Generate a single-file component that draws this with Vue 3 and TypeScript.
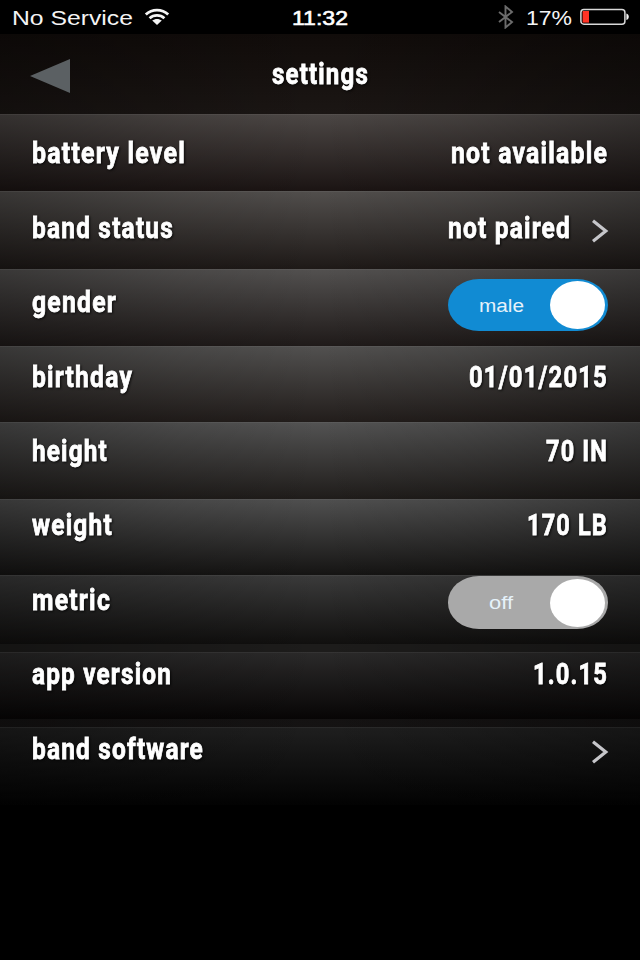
<script setup lang="ts">
import { h, ref, type FunctionalComponent } from 'vue'

interface FitProps {
  text: string
  width: number
}

// One line of text condensed or widened to an exact width; the baseline sits 24px below the top.
const FitText: FunctionalComponent<FitProps> = (props) =>
  h('svg', { width: props.width, height: 32, overflow: 'visible' }, [
    h('text', { x: 0, y: 24, textLength: props.width, lengthAdjust: 'spacingAndGlyphs' }, props.text),
  ])
FitText.props = ['text', 'width']

interface Row {
  label: string
  labelWidth: number
  value?: string
  valueWidth?: number
  toggle?: 'on' | 'off'
  link?: boolean
  height: number
  pad: number
  top: string
  bottom: string
  lip?: boolean
}

const rows = ref<Row[]>([
  { label: 'battery level', labelWidth: 154, value: 'not available', valueWidth: 157, height: 77, pad: 25, top: '#4c4745', bottom: '#1b1413' },
  { label: 'band status', labelWidth: 142, value: 'not paired', valueWidth: 123, link: true, height: 78, pad: 23, top: '#524f4d', bottom: '#1e1917' },
  { label: 'gender', labelWidth: 85, value: 'male', valueWidth: 45, toggle: 'on', height: 77, pad: 19, top: '#535150', bottom: '#1f1a19' },
  { label: 'birthday', labelWidth: 101, value: '01/01/2015', valueWidth: 139, height: 76, pad: 17, top: '#525150', bottom: '#221d1b' },
  { label: 'height', labelWidth: 76, value: '70 IN', valueWidth: 62, height: 77, pad: 15, top: '#535353', bottom: '#1f1c1a' },
  { label: 'weight', labelWidth: 81, value: '170 LB', valueWidth: 81, height: 76, pad: 12, top: '#505050', bottom: '#151413' },
  { label: 'metric', labelWidth: 79, value: 'off', valueWidth: 24, toggle: 'off', height: 77, pad: 11, top: '#3b3b3b', bottom: '#100f0e', lip: true },
  { label: 'app version', labelWidth: 140, value: '1.0.15', valueWidth: 75, height: 75, pad: 8, top: '#2b2a2a', bottom: '#070505', lip: true },
  { label: 'band software', labelWidth: 172, link: true, height: 78, pad: 8, top: '#1f1f1f', bottom: '#020202' },
])
</script>

<template>
  <div class="screen">
    <div class="status">
      <div class="carrier">
        <FitText class="status-text" text="No Service" :width="121" />
        <svg class="wifi" width="26" height="18" viewBox="0 0 26 18">
          <path d="M1.8 6.6C8 .7 18 .7 24.2 6.6" />
          <path d="M5.6 10.2C9.8 6.4 16.2 6.4 20.4 10.2" />
          <path class="dot" d="M8.2 12.6C11 10.4 15 10.4 17.8 12.6L13 17z" />
        </svg>
      </div>
      <FitText class="status-text clock" text="11:32" :width="56" />
      <div class="power">
        <svg class="bluetooth" width="16" height="24" viewBox="0 0 16 24">
          <path d="M1 7l13 10-6.5 5.5v-21L14 7 1 17" />
        </svg>
        <FitText class="status-text" text="17%" :width="46" />
        <svg class="battery" width="50" height="18" viewBox="0 0 50 18">
          <rect class="shell" x=".9" y="1.4" width="44" height="14.8" rx="3" />
          <rect class="charge" x="2.6" y="3" width="6.4" height="11.6" />
          <path class="nub" d="M46.4 5.6c3.2.6 3.2 5.8 0 6.4z" />
        </svg>
      </div>
    </div>

    <header class="titlebar">
      <svg class="back" width="40" height="34" viewBox="0 0 40 34"><path d="M0 17L40 0v34z" /></svg>
      <FitText class="bold title" text="settings" :width="97" />
    </header>

    <main class="list">
      <section
        v-for="row in rows"
        :key="row.label"
        class="row"
        :class="{ lip: row.lip }"
        :style="{ height: row.height + 'px', '--top': row.top, '--bottom': row.bottom, '--pad': row.pad + 'px' }"
      >
        <FitText class="bold label" :text="row.label" :width="row.labelWidth" />
        <div v-if="row.toggle" class="switch" :class="row.toggle">
          <span class="caption"><FitText class="small" :text="row.value ?? ''" :width="row.valueWidth ?? 0" /></span>
          <span class="knob"></span>
        </div>
        <FitText v-else-if="row.value" class="bold value" :text="row.value" :width="row.valueWidth ?? 0" />
        <svg v-if="row.link" class="chevron" width="18" height="24" viewBox="0 0 18 24">
          <path d="M2 1.8L14.8 12 2 22.2" />
        </svg>
      </section>
    </main>
  </div>
</template>

<style>
body {
  margin: 0;
  background: #000;
}
</style>

<style scoped>
.screen {
  width: 640px;
  height: 960px;
  overflow: hidden;
  background: #000;
  color: #fff;
  font-family: Roboto, 'Liberation Sans', sans-serif;
}
svg {
  display: block;
  flex: none;
}
.status {
  height: 34px;
  display: grid;
  grid-template-columns: 1fr auto 1fr;
  padding: 0 10px 0 12px;
  background: #000;
}
.status-text {
  font: 21px 'Liberation Sans', Arial, sans-serif;
  fill: #f4f4f4;
}
.clock {
  margin-top: 1px;
  margin-right: 3px;
  fill: #fff;
  stroke: #fff;
  stroke-width: 0.6;
}
.carrier,
.power {
  display: flex;
  padding-top: 1px;
}
.power {
  justify-content: flex-end;
}
.wifi {
  margin: 7px 0 0 11px;
  fill: none;
  stroke: #f4f4f4;
  stroke-width: 2.8;
}
.wifi .dot {
  fill: #f4f4f4;
  stroke: none;
}
.bluetooth {
  margin: 4px 12px 0 0;
  fill: none;
  stroke: #6c6c6c;
  stroke-width: 1.9;
}
.battery {
  margin: 7px 0 0 8px;
}
.shell {
  fill: none;
  stroke: #d8d8d8;
  stroke-width: 1.5;
}
.charge {
  fill: #ff3325;
}
.nub {
  fill: #f4f4f4;
}
.titlebar {
  height: 80px;
  box-sizing: border-box;
  display: grid;
  grid-template-columns: 1fr auto 1fr;
  padding: 25px 30px 0;
  background:
    linear-gradient(90deg, rgba(0, 0, 0, 0.3), transparent 50%, rgba(0, 0, 0, 0.3)),
    linear-gradient(#110c0a, #1b1614);
}
.title {
  margin-top: 1px;
}
.back {
  fill: #5b6063;
}
.bold {
  font: 700 29px Roboto, 'Liberation Sans', sans-serif;
  letter-spacing: 1.4px;
  fill: #fff;
  stroke: #fff;
  stroke-width: 0.8;
  filter: drop-shadow(1px 1px 1px rgba(0, 0, 0, 0.75));
}
.row {
  box-sizing: border-box;
  display: flex;
  align-items: flex-start;
  padding: var(--pad) 32px 0;
  background:
    linear-gradient(90deg, rgba(0, 0, 0, 0.3), rgba(0, 0, 0, 0.1) 28%, transparent 50%, rgba(0, 0, 0, 0.1) 72%, rgba(0, 0, 0, 0.3)),
    linear-gradient(var(--top), var(--bottom));
  box-shadow: inset 0 1px rgba(255, 255, 255, 0.05);
}
.row.lip {
  background:
    linear-gradient(90deg, rgba(0, 0, 0, 0.3), transparent 50%, rgba(0, 0, 0, 0.3)),
    linear-gradient(transparent calc(100% - 8px), rgba(255, 255, 255, 0.055) calc(100% - 8px)),
    linear-gradient(var(--top), var(--bottom) 90%);
}
.label {
  margin-right: auto;
}
.chevron {
  margin: 5px -1px 0 20px;
  fill: none;
  stroke: #c6c6ca;
  stroke-width: 3.2;
}
.switch {
  width: 160px;
  height: 52px;
  box-sizing: border-box;
  display: flex;
  align-items: center;
  justify-content: space-between;
  margin-top: calc(10px - var(--pad));
  padding-right: 3px;
  border-radius: 31px / 26px;
  background: #118bd3;
}
.switch.off {
  margin-top: calc(1px - var(--pad));
  height: 53px;
  background: #a9a9a9;
}
.caption {
  width: 98px;
  display: flex;
  justify-content: center;
  padding: 0 0 3px 5px;
}
.small {
  font: 18px 'Liberation Sans', Arial, sans-serif;
  fill: #e6f2fa;
}
.knob {
  width: 56px;
  height: 48px;
  border-radius: 50%;
  background: #fff;
}
</style>
